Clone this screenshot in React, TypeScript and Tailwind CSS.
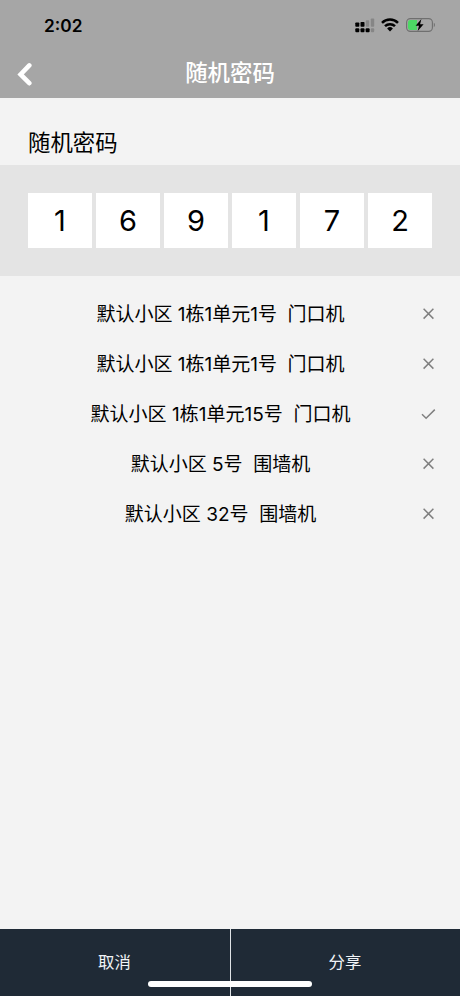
import React from 'react';

interface Door {
  id: number;
  name: string;
  opened: boolean;
}

const CODE = ['1', '6', '9', '1', '7', '2'];

const DOORS: Door[] = [
  { id: 1, name: '默认小区 1栋1单元1号  门口机', opened: false },
  { id: 2, name: '默认小区 1栋1单元1号  门口机', opened: false },
  { id: 3, name: '默认小区 1栋1单元15号  门口机', opened: true },
  { id: 4, name: '默认小区 5号  围墙机', opened: false },
  { id: 5, name: '默认小区 32号  围墙机', opened: false },
];

const SignalIcon = () => (
  <svg width="20" height="15" viewBox="0 0 20 15">
    <g fill="#000">
      <rect x="0.3" y="4.4" width="4" height="4.3" rx="0.8" />
      <rect x="5.5" y="4" width="4" height="4.7" rx="0.8" />
      <rect x="0.3" y="10.2" width="4" height="4" rx="1" />
      <rect x="5.5" y="10.2" width="4" height="4" rx="1" />
      <rect x="10.6" y="10.2" width="4" height="4" rx="1" />
    </g>
    <g fill="#868686">
      <rect x="10.8" y="2.2" width="3.4" height="6.5" rx="0.8" />
      <rect x="15.8" y="0.4" width="3.4" height="8.3" rx="0.8" />
      <rect x="15.8" y="10.2" width="3.4" height="4" rx="1" />
    </g>
  </svg>
);

const WifiIcon = () => (
  <svg width="18" height="14" viewBox="0 0 18 14" fill="none" stroke="#000" strokeWidth="2.5">
    <path d="M1 4.9a11.4 11.4 0 0 1 16 0" />
    <path d="M4 8.2a7.1 7.1 0 0 1 10 0" />
    <path d="M9 13.4 6.1 10.5a4.1 4.1 0 0 1 5.8 0z" fill="#000" stroke="none" />
  </svg>
);

const BatteryIcon = () => (
  <svg width="30" height="14" viewBox="0 0 30 14">
    <rect x="0.6" y="0.6" width="25.8" height="12.8" rx="3.8" fill="none" stroke="#6f6f6f" strokeWidth="1.1" />
    <path d="M2 4.2A2.2 2.2 0 0 1 4.2 2H11v10H4.2A2.2 2.2 0 0 1 2 9.8z" fill="#4cd964" />
    <path d="M27.8 4.8c1.5.6 1.5 3.8 0 4.4z" fill="#6f6f6f" />
    <path d="M15.4 1 9.6 7.8h3.4L11.7 13 17.6 6.2h-3.5z" fill="#000" />
  </svg>
);

const DoorStatus = ({ opened }: { opened: boolean }) => (
  <svg width="16" height="16" viewBox="0 0 16 16" fill="none" stroke="#808080" strokeWidth="1.5">
    {opened ? <path d="M2 8.2 6.1 12.2 14.8 3.6" /> : <path d="M3.6 2.8 13.4 12.6M13.4 2.8 3.6 12.6" />}
  </svg>
);

export default function App() {
  return (
    <div className="relative flex h-[996px] w-[460px] flex-col overflow-hidden bg-[#f3f3f3] font-[Inter,'Noto_Sans_CJK_SC',sans-serif] text-black">
      <header className="h-[98px] bg-[#a6a6a6]">
        <div className="flex h-[50px] items-center justify-between pr-[24px] pl-[44px]">
          <span className="pt-px text-[17.3px] font-semibold">2:02</span>
          <div className="flex items-center">
            <SignalIcon />
            <span className="ml-[6px]"><WifiIcon /></span>
            <span className="ml-[7px]"><BatteryIcon /></span>
          </div>
        </div>
        <div className="grid h-12 grid-cols-[1fr_auto_1fr] items-center">
          <button className="ml-[17px] w-4" aria-label="返回">
            <svg width="16" height="24" viewBox="0 0 16 24" fill="none" stroke="#fff" strokeWidth="4.6" strokeLinecap="round">
              <path d="M12.3 3.4 3.6 12.4 12.3 21.2" />
            </svg>
          </button>
          <h1 className="pb-0.5 text-[22.4px] leading-none font-medium text-white">随机密码</h1>
        </div>
      </header>

      <h2 className="flex h-[67px] items-end pb-[10px] pl-[28px] text-[22.4px] leading-[24px]">随机密码</h2>

      <section className="flex h-[111px] gap-1 bg-[#e4e4e4] pt-[28px] pl-[28px]">
        {CODE.map((digit, idx) => (
          <div key={idx} className="flex h-[55px] w-16 items-center justify-center bg-white text-[29px]">
            {digit}
          </div>
        ))}
      </section>

      <ul className="flex-1 pt-[13px]">
        {DOORS.map((door) => (
          <li key={door.id} className="flex h-[50px] items-center">
            <span className="ml-[21px] flex-1 pt-0.5 text-center text-[19px] leading-[28px] whitespace-pre">{door.name}</span>
            <span className="mr-[24px] w-4">
              <DoorStatus opened={door.opened} />
            </span>
          </li>
        ))}
      </ul>

      <footer className="grid h-[67px] grid-cols-2 bg-[#1f2a36] text-[16.4px] text-[#f1f4f7]">
        <button className="pr-px">取消</button>
        <button className="border-l border-[#dfe3e6] pr-px">分享</button>
      </footer>
      <div className="absolute bottom-[9px] left-[148px] h-[6px] w-[164px] rounded-full bg-white" />
    </div>
  );
}
